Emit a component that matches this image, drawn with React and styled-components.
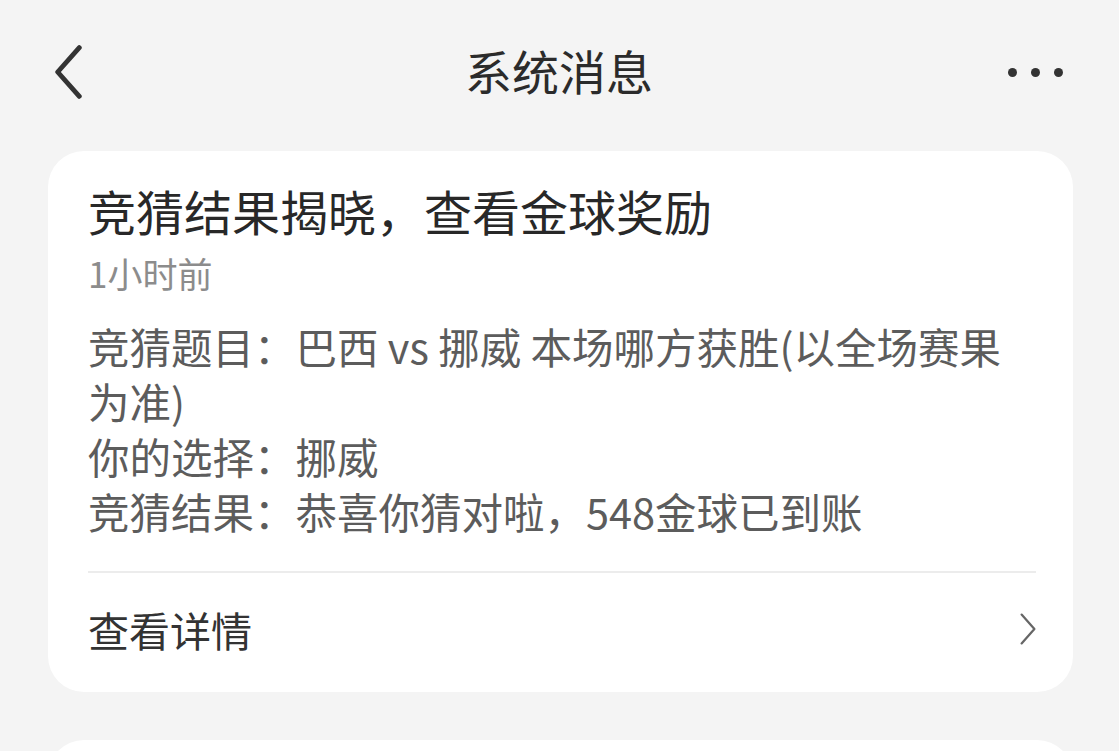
import styled, { createGlobalStyle } from 'styled-components';

const GlobalStyle = createGlobalStyle`
    html, body {
        margin: 0;
        padding: 0;
        background: #f4f4f4;
    }
    body {
        font-family: "Noto Sans CJK SC", "Noto Sans", sans-serif;
        -webkit-font-smoothing: antialiased;
    }
`

const Page = styled.div`
    width: 1119px;
    height: 751px;
    overflow: hidden;
    background: #f4f4f4;
`

const Header = styled.div`
    height: 144px;
    box-sizing: border-box;
    display: flex;
    align-items: center;
    justify-content: space-between;
    padding: 0 56px 0 55px;
`

const IconButton = styled.div`
    width: 56px;
    height: 60px;
    display: flex;
    align-items: center;
    justify-content: ${props => props.end ? 'flex-end' : 'flex-start'};
    color: #333;
`

const HeaderTitle = styled.h1`
    margin: 0 0 6px;
    font-size: 47px;
    font-weight: 400;
    color: #2b2b2b;
`

const Dots = styled.div`
    display: flex;
    gap: 14px;
`

const Dot = styled.span`
    width: 9px;
    height: 9px;
    border-radius: 50%;
    background: #333;
`

const List = styled.div`
    display: flex;
    flex-direction: column;
    gap: 48px;
    padding: 7px 46px 0 48px;
`

const Card = styled.div`
    background: #fff;
    border-radius: 36px;
    padding: 0 37px 0 40px;
    min-height: ${props => props.empty ? '80px' : 'auto'};
`

const CardTitle = styled.div`
    padding-top: 28px;
    font-size: 48px;
    line-height: 62px;
    font-weight: 400;
    color: #282828;
`

const Time = styled.div`
    margin-top: 10px;
    font-size: 35px;
    line-height: 44px;
    color: #8c8c8c;
`

const Body = styled.div`
    margin-top: 24px;
    padding-bottom: 32px;
    border-bottom: 2px solid #ececec;
`

const Line = styled.div`
    font-size: 41.5px;
    line-height: 55px;
    color: #5c5c5c;
`

const DetailRow = styled.div`
    height: 119px;
    box-sizing: border-box;
    padding-bottom: 8px;
    display: flex;
    align-items: center;
    justify-content: space-between;
`

const DetailText = styled.span`
    font-size: 41px;
    color: #333;
`

const Chevron = ({ dir, size, color, width }) => (
    <svg width={size} height={size * 2} viewBox="0 0 10 20" fill="none">
        <polyline
            points={dir === 'left' ? '9,1 1,10 9,19' : '1,1 9,10 1,19'}
            stroke={color}
            strokeWidth={width}
            strokeLinecap="round"
            strokeLinejoin="round"
        />
    </svg>
)

const messages = [
    {
        title: '竞猜结果揭晓，查看金球奖励',
        time: '1小时前',
        lines: [
            '竞猜题目：巴西 vs 挪威 本场哪方获胜(以全场赛果为准)',
            '你的选择：挪威',
            '竞猜结果：恭喜你猜对啦，548金球已到账',
        ],
    },
]

const App = () => {
    return (
        <Page>
            <GlobalStyle/>
            <Header>
                <IconButton>
                    <Chevron dir="left" size={27} color="#333" width={1.8}/>
                </IconButton>
                <HeaderTitle>系统消息</HeaderTitle>
                <IconButton end>
                    <Dots>
                        <Dot/><Dot/><Dot/>
                    </Dots>
                </IconButton>
            </Header>
            <List>
                {messages.map(item => (
                    <Card key={item.title}>
                        <CardTitle>{item.title}</CardTitle>
                        <Time>{item.time}</Time>
                        <Body>
                            {item.lines.map(line => <Line key={line}>{line}</Line>)}
                        </Body>
                        <DetailRow>
                            <DetailText>查看详情</DetailText>
                            <Chevron dir="right" size={16} color="#666" width={1.4}/>
                        </DetailRow>
                    </Card>
                ))}
                <Card empty/>
            </List>
        </Page>
    )
}

export default App;
